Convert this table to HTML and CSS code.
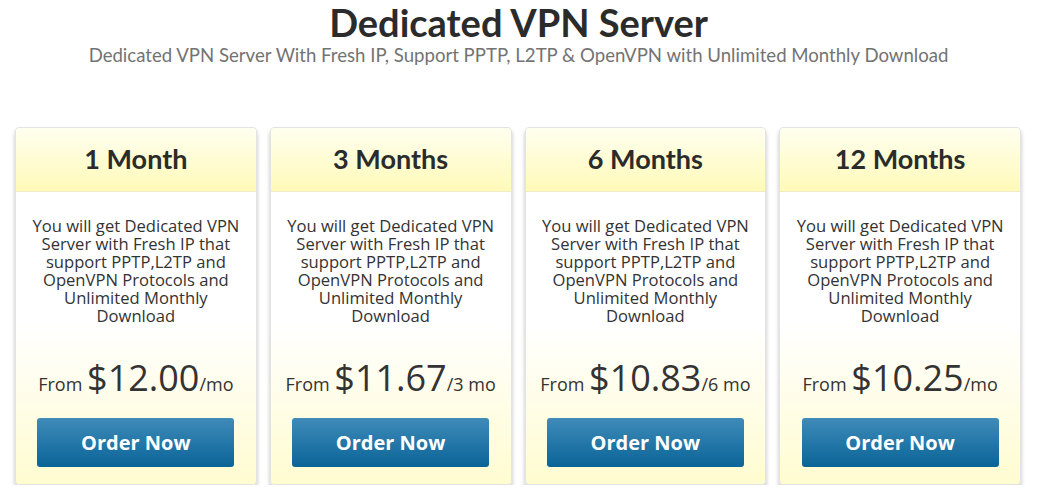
FILE: index.html
```html
<!DOCTYPE html>
<html lang="en">
<head>
  <meta charset="UTF-8" />
  <title>Dedicated VPN Server</title>
  <link rel="stylesheet" href="styles.css">
</head>
<body>

  <h1>Dedicated VPN Server</h1>
  <p class="subtitle">Dedicated VPN Server With Fresh IP, Support PPTP, L2TP &amp; OpenVPN with Unlimited Monthly Download</p>

  <div class="plans">
    <div class="plan">
      <div class="plan-head">1 Month</div>
      <p class="desc">You will get Dedicated VPN Server with Fresh IP that support PPTP,L2TP and OpenVPN Protocols and Unlimited Monthly Download</p>
      <div class="price">From <span class="amount">$12.00</span>/mo</div>
      <a class="order" href="#">Order Now</a>
    </div>
    <div class="plan">
      <div class="plan-head">3 Months</div>
      <p class="desc">You will get Dedicated VPN Server with Fresh IP that support PPTP,L2TP and OpenVPN Protocols and Unlimited Monthly Download</p>
      <div class="price">From <span class="amount">$11.67</span>/3 mo</div>
      <a class="order" href="#">Order Now</a>
    </div>
    <div class="plan">
      <div class="plan-head">6 Months</div>
      <p class="desc">You will get Dedicated VPN Server with Fresh IP that support PPTP,L2TP and OpenVPN Protocols and Unlimited Monthly Download</p>
      <div class="price">From <span class="amount">$10.83</span>/6 mo</div>
      <a class="order" href="#">Order Now</a>
    </div>
    <div class="plan">
      <div class="plan-head">12 Months</div>
      <p class="desc">You will get Dedicated VPN Server with Fresh IP that support PPTP,L2TP and OpenVPN Protocols and Unlimited Monthly Download</p>
      <div class="price">From <span class="amount">$10.25</span>/mo</div>
      <a class="order" href="#">Order Now</a>
    </div>
  </div>

</body>
</html>
```

FILE: styles.css
```css
* {
  box-sizing: border-box;
}

body {
  margin: 0;
  padding: 0;
  background: #fff;
  font-family: 'Open Sans', sans-serif;
  color: #333;
}

h1 {
  font-family: 'Lato', sans-serif;
  font-weight: 700;
  font-size: 38px;
  color: #2b2b2b;
  text-align: center;
  margin: 0;
  line-height: 44px;
}

.subtitle {
  font-family: 'Lato', sans-serif;
  font-weight: 400;
  font-size: 18.6px;
  color: #737373;
  text-align: center;
  margin: 0;
  line-height: 22px;
}

/* Tarifler */
.plans {
  display: grid;
  grid-template-columns: repeat(4, 1fr);
  gap: 13px;
  margin: 61px 16px 0 15px;
}

.plan {
  height: 358px;
  display: flex;
  flex-direction: column;
  align-items: center;
  border: 1px solid #e3e3e3;
  border-radius: 4px;
  background: linear-gradient(#fff 0%, #fff 55%, #fffcd0 100%);
  box-shadow: 0 4px 4px rgba(0, 0, 0, 0.25);
  text-align: center;
}

.plan-head {
  align-self: stretch;
  height: 64px;
  line-height: 62px;
  font-family: 'Lato', sans-serif;
  font-weight: 700;
  font-size: 27px;
  color: #2b2b2b;
  background: linear-gradient(#fffff0, #fffab8);
  border-bottom: 1px solid #f0ecc8;
  border-radius: 4px 4px 0 0;
}

.desc {
  width: 222px;
  margin: 25px 0 0;
  font-size: 16.6px;
  line-height: 18px;
  color: #333;
}

.price {
  margin-top: auto;
  font-size: 18px;
  color: #333;
  line-height: 40px;
}

.amount {
  font-size: 36px;
}

.order {
  display: block;
  width: 197px;
  height: 49px;
  line-height: 49px;
  margin: 14px 0 17px;
  background: linear-gradient(#3f8bb9, #0a6497);
  border-radius: 3px;
  color: #fff;
  font-weight: 700;
  font-size: 20px;
  text-decoration: none;
}
```
